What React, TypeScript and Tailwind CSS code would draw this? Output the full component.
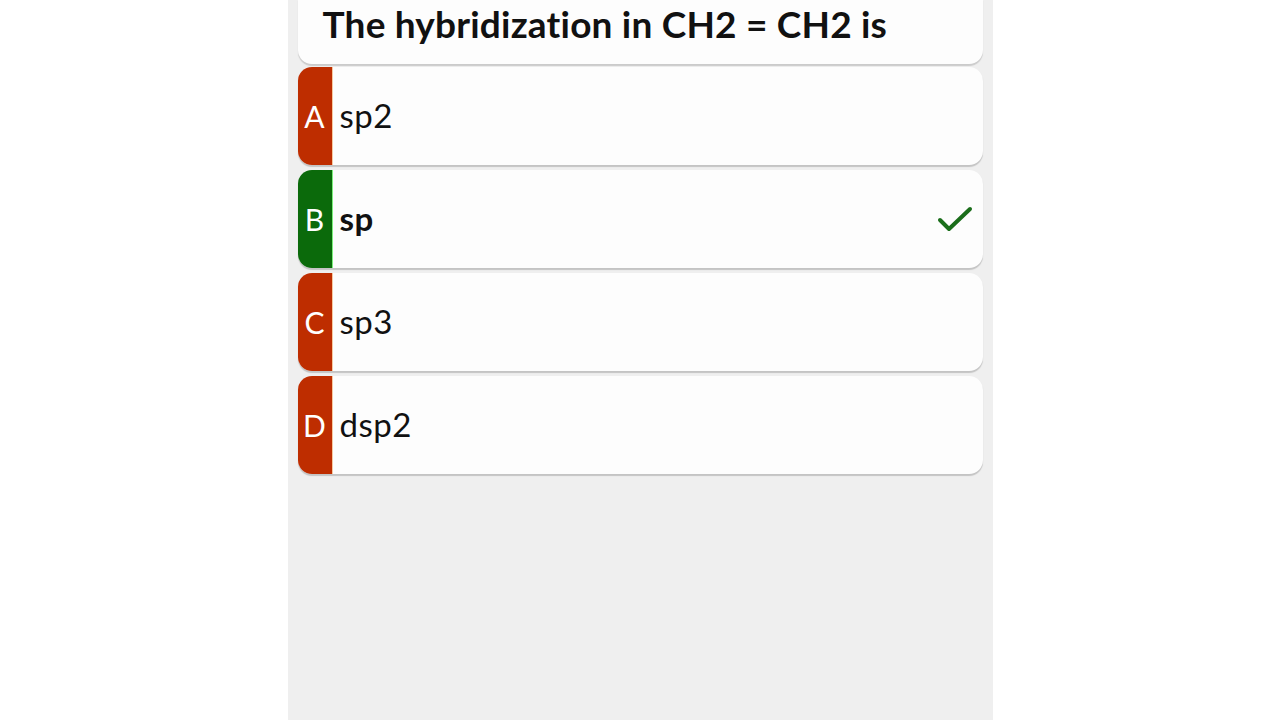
import React from "react";

type Option = {
  key: string;
  label: string;
  correct?: boolean;
};

const options: Option[] = [
  { key: "A", label: "sp2" },
  { key: "B", label: "sp", correct: true },
  { key: "C", label: "sp3" },
  { key: "D", label: "dsp2" },
];

const CheckIcon = () => (
  <svg width="36" height="28" viewBox="0 0 36 28" fill="none">
    <path d="M3 15 L12 24 L33 4" stroke="#1b6e1b" strokeWidth="4" strokeLinecap="round" strokeLinejoin="round" />
  </svg>
);

const OptionRow = ({ opt }: { opt: Option }) => (
  <div className="flex h-[98px] overflow-hidden rounded-[14px] bg-[#fdfdfd] shadow-[0_1.5px_1px_rgba(0,0,0,0.18)]">
    <div
      className={`flex w-[35px] shrink-0 items-center justify-center border-r text-[30px] text-white ${
        opt.correct ? "bg-[#0b6a0b] border-[#7cf07c]" : "bg-[#be2d00] border-[#f7c9a0]"
      }`}
    >
      {opt.key}
    </div>
    <div className="flex flex-1 items-center pl-[7px] pr-[10px]">
      <span className={`text-[33px] tracking-[0.5px] text-[#111] ${opt.correct ? "font-bold" : ""}`}>{opt.label}</span>
      {opt.correct && (
        <div className="ml-auto">
          <CheckIcon />
        </div>
      )}
    </div>
  </div>
);

export default function App() {
  return (
    <div className="flex h-[720px] w-full justify-center bg-white font-['Lato',sans-serif]">
      <div className="flex h-full w-[705px] flex-col gap-[3px] bg-[#efefef] px-[10px]">
        <div className="flex h-[64px] items-end rounded-b-[14px] bg-[#fdfdfd] pb-[22px] pl-[25px] shadow-[0_1.5px_1px_rgba(0,0,0,0.15)]">
          <h1 className="text-[37px] font-bold leading-none tracking-[0.2px] text-[#111]">The hybridization in CH2 = CH2 is</h1>
        </div>
        <div className="flex flex-col gap-[5px]">
          {options.map((o) => (
            <OptionRow key={o.key} opt={o} />
          ))}
        </div>
      </div>
    </div>
  );
}
